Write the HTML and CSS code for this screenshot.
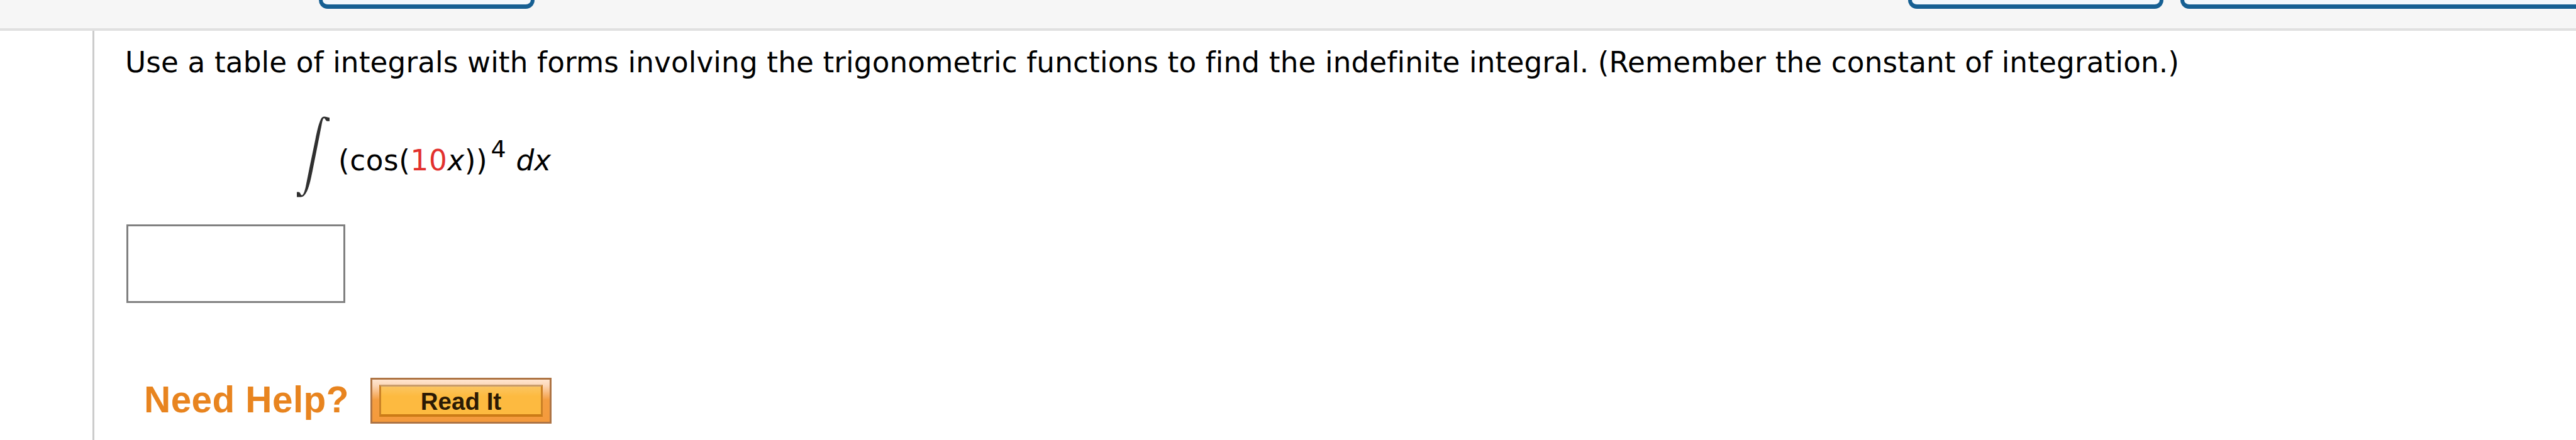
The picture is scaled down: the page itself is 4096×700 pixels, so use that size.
FILE: index.html
```html
<!DOCTYPE html>
<html>
<head>
	<meta charset="utf-8">
	<title>Indefinite integral</title>
	<link rel="stylesheet" href="styles.css">
</head>
<body>
	<div class="toolbar">
		<div class="btn btn-first"></div>
		<div class="btn btn-second"></div>
		<div class="btn btn-third"></div>
	</div>
	<div class="main">
		<div class="gutter"></div>
		<div class="question">
			<p class="text">Use a table of integrals with forms involving the trigonometric functions to find the indefinite integral. (Remember the constant of integration.)</p>
			<div class="formula">
				<svg class="integral" width="52" height="129" viewBox="0 0 180 443">
					<path d="M180 25H165C158 21 155 9 149 9C143 11 140 28 136 48L108 190L86 300C76 350 66 395 51 420C43 435 34 443 22 443H0V415H11C20 418 20 430 27 433C36 433 43 410 48 389L74 260L102 125C112 75 122 35 132 15C137 4 143 0 151 0C162 0 169 5 180 6Z" fill="#303030"/>
				</svg>
				<span class="expr">(cos(<span class="red">10</span><i>x</i>))</span>
				<span class="power">4</span>
				<i class="dx">dx</i>
			</div>
			<input class="answer" type="text">
			<div class="help">
				<span class="help-title">Need Help?</span>
				<button class="read"><span>Read It</span></button>
			</div>
		</div>
	</div>
</body>
</html>
```
FILE: styles.css
```css
*{
	box-sizing: border-box;
}
body{
	margin: 0;
	height: 700px;
	overflow: hidden;
	background-color: #fff;
	color: #000;
	font-family: Verdana, "DejaVu Sans", sans-serif;
	font-size: 45.3px;
}
.toolbar{
	display: flex;
	height: 49px;
	padding-left: 507px;
	background-color: #f6f6f6;
	border-bottom: 4px solid #e0e0e0;
}
.btn{
	flex: none;
	height: 14px;
	border: 6px solid #176093;
	border-top: none;
	border-bottom-width: 7px;
	border-radius: 0 0 14px 14px;
	background-color: #f3f8fc;
}
.btn-first{
	width: 343px;
}
.btn-second{
	width: 406px;
	margin-left: 2184px;
}
.btn-third{
	width: 660px;
	margin-left: 27px;
}
.main{
	display: flex;
	height: 651px;
}
.gutter{
	width: 150px;
	border-right: 3px solid #ccc;
}
.question{
	padding: 23px 0 0 51px;
}
.text{
	margin: 0 0 0 -2px;
	line-height: 56px;
	letter-spacing: 0.12px;
	white-space: nowrap;
}
.formula{
	display: flex;
	align-items: flex-start;
	height: 172px;
	margin: 57px 0 0 271px;
	line-height: 56px;
	white-space: nowrap;
}
.expr{
	margin: 43px 0 0 14px;
	letter-spacing: 0.6px;
}
.red{
	color: #e2302d;
}
.power{
	margin: 24px 0 0 5px;
	font-size: 38px;
}
.dx{
	margin: 43px 0 0 16px;
}
.answer{
	display: block;
	width: 348px;
	height: 125px;
	padding: 0 10px;
	border: 3px solid #808080;
	font: inherit;
	outline: none;
}
.help{
	display: flex;
	align-items: flex-start;
	margin-top: 119px;
	font-family: Arial, "Liberation Sans", sans-serif;
	font-weight: bold;
}
.help-title{
	width: 360px;
	padding-left: 28px;
	line-height: 70px;
	font-size: 58.5px;
	letter-spacing: 0.4px;
	color: #e8841f;
	white-space: nowrap;
}
.read{
	flex: none;
	width: 288px;
	height: 73px;
	margin-left: 28px;
	padding: 8px 11px;
	border: 3px solid #ae7444;
	background: linear-gradient(#ffe5d0, #fcd7b8 14%, #f49d40 48%, #f49a3c);
	font: inherit;
}
.read span{
	display: block;
	height: 51px;
	border: 3px solid #cb8125;
	border-top-color: #c99c6c;
	border-bottom: 4px solid #cb7b16;
	background: linear-gradient(#fbc561, #fdba40 35%);
	line-height: 48px;
	font-size: 38.5px;
	color: #2b1a05;
}
```
